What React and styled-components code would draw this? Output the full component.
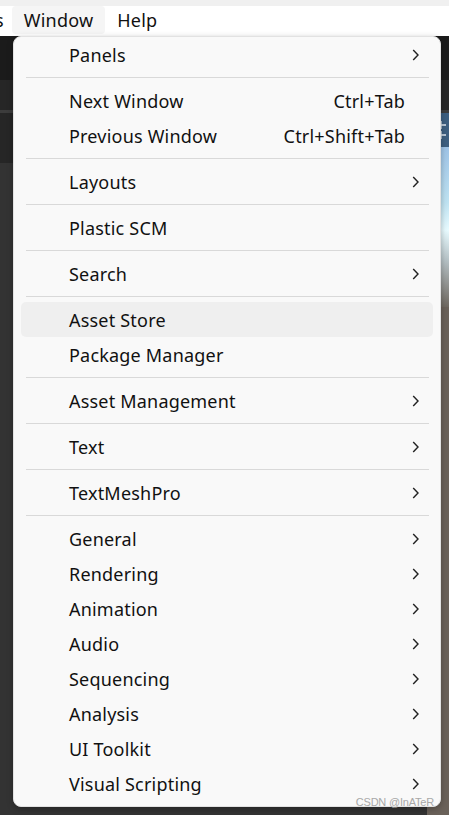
import React from 'react';
import styled, { createGlobalStyle } from 'styled-components';

const GlobalStyle = createGlobalStyle`
  html, body {
    margin: 0;
    padding: 0;
    width: 449px;
    height: 815px;
    overflow: hidden;
    background: #333;
  }
  #root {
    height: 100%;
  }
`;

const Page = styled.div`
  position: relative;
  display: flex;
  flex-direction: column;
  width: 449px;
  height: 815px;
  overflow: hidden;
  font-family: 'Noto Sans', 'Open Sans', sans-serif;
  color: #111;
`;

const MenuBar = styled.div`
  display: flex;
  align-items: stretch;
  box-sizing: border-box;
  height: 36px;
  padding-top: 6px;
  padding-bottom: 2px;
  background: #fff;
  box-shadow: inset 0 6px 0 #f0f0f0;
`;

const BarItem = styled.div`
  display: flex;
  align-items: center;
  padding: 0 12px;
  font-size: 18px;
  letter-spacing: 0.2px;
  border-radius: 4px;
  background: ${(p) => (p.$open ? '#f5f5f5' : 'transparent')};
`;

const CutItem = styled(BarItem)`
  padding: 0;
  margin-left: -5px;
  margin-right: 8px;
`;

const Workspace = styled.div`
  flex: 1;
  display: flex;
  flex-direction: column;
`;

const Toolbar = styled.div`
  height: 44px;
  background: #1b1b1b;
`;

const TabStrip = styled.div`
  height: 30px;
  background: #262626;
  border-bottom: 3px solid #3c3c3c;
`;

const Body = styled.div`
  flex: 1;
  display: flex;
`;

const LeftPanel = styled.div`
  flex: 1;
  background: #333;
  border-top: 50px solid #262626;
`;

const SceneView = styled.div`
  width: 22px;
  display: flex;
  flex-direction: column;
`;

const SceneBar = styled.div`
  height: 34px;
  background: #3d5f80;
  display: flex;
  align-items: center;
  padding-left: 8px;
`;

const Sky = styled.div`
  height: 160px;
  background: linear-gradient(180deg, #9ec3e6 0%, #bfe3f2 35%, #e8fbff 52%, #b8c4c8 70%, #6f6860 100%);
`;

const Ground = styled.div`
  flex: 1;
  background: #6a6159;
`;

const Menu = styled.div`
  position: absolute;
  left: 13px;
  top: 36px;
  width: 428px;
  box-sizing: border-box;
  padding: 0 0 5px;
  background: #f9f9f9;
  border: 1px solid #e2e2e2;
  border-radius: 8px;
  box-shadow: 0 2px 6px rgba(0, 0, 0, 0.28);
`;

const Item = styled.div`
  display: flex;
  align-items: center;
  height: 35px;
  margin: 0 7px;
  padding: 0 12px 0 48px;
  border-radius: 5px;
  font-size: 18px;
  letter-spacing: 0.2px;
  background: ${(p) => (p.$hover ? '#efefef' : 'transparent')};
`;

const Label = styled.span`
  flex: 1;
  white-space: nowrap;
`;

const Shortcut = styled.span`
  margin-right: 16px;
  white-space: nowrap;
`;

const Separator = styled.div`
  height: 11px;
  display: flex;
  align-items: center;
  padding: 0 11px 0 12px;

  &::after {
    content: '';
    flex: 1;
    height: 1px;
    background: #d9d9d9;
  }
`;

const Watermark = styled.div`
  position: absolute;
  right: 15px;
  bottom: 7px;
  font-family: 'Liberation Sans', sans-serif;
  font-size: 11px;
  letter-spacing: -0.2px;
  color: #a8a8a8;
`;

const Chevron = () => (
  <svg width="10" height="12" viewBox="0 0 10 12">
    <path d="M2.2 1 L7 6 L2.2 11" fill="none" stroke="#222" strokeWidth="1.4" />
  </svg>
);

const Crosses = () => (
  <svg width="12" height="20" viewBox="0 0 12 20">
    <path d="M1 5h10M6 1v8M1 15h10M6 11v8" stroke="#dfe8f0" strokeWidth="1.3" />
  </svg>
);

const groups = [
  [{ label: 'Panels', sub: true }],
  [
    { label: 'Next Window', key: 'Ctrl+Tab' },
    { label: 'Previous Window', key: 'Ctrl+Shift+Tab' },
  ],
  [{ label: 'Layouts', sub: true }],
  [{ label: 'Plastic SCM' }],
  [{ label: 'Search', sub: true }],
  [{ label: 'Asset Store', hover: true }, { label: 'Package Manager' }],
  [{ label: 'Asset Management', sub: true }],
  [{ label: 'Text', sub: true }],
  [{ label: 'TextMeshPro', sub: true }],
  [
    { label: 'General', sub: true },
    { label: 'Rendering', sub: true },
    { label: 'Animation', sub: true },
    { label: 'Audio', sub: true },
    { label: 'Sequencing', sub: true },
    { label: 'Analysis', sub: true },
    { label: 'UI Toolkit', sub: true },
    { label: 'Visual Scripting', sub: true },
  ],
];

export default function App() {
  return (
    <Page>
      <GlobalStyle />
      <MenuBar>
        <CutItem>s</CutItem>
        <BarItem $open>Window</BarItem>
        <BarItem>Help</BarItem>
      </MenuBar>
      <Workspace>
        <Toolbar />
        <TabStrip />
        <Body>
          <LeftPanel />
          <SceneView>
            <SceneBar>
              <Crosses />
            </SceneBar>
            <Sky />
            <Ground />
          </SceneView>
        </Body>
      </Workspace>

      <Menu>
        {groups.map((group, gi) => (
          <React.Fragment key={gi}>
            {gi > 0 && <Separator />}
            {group.map((item) => (
              <Item key={item.label} $hover={item.hover}>
                <Label>{item.label}</Label>
                {item.key && <Shortcut>{item.key}</Shortcut>}
                {item.sub && <Chevron />}
              </Item>
            ))}
          </React.Fragment>
        ))}
      </Menu>
      <Watermark>CSDN @InATeR</Watermark>
    </Page>
  );
}
